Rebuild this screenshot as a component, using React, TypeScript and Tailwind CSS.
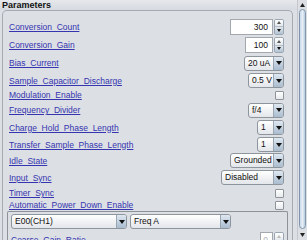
import React from "react";

type Ctl =
  | { kind: "spin"; value: string; w: number }
  | { kind: "combo"; value: string; w: number }
  | { kind: "check" };

type Row = { label: string; h: number; ctl: Ctl };

const rows: Row[] = [
  { label: "Conversion_Count", h: 19, ctl: { kind: "spin", value: "300", w: 54 } },
  { label: "Conversion_Gain", h: 18, ctl: { kind: "spin", value: "100", w: 39 } },
  { label: "Bias_Current", h: 18, ctl: { kind: "combo", value: "20 uA", w: 40 } },
  { label: "Sample_Capacitor_Discharge", h: 17, ctl: { kind: "combo", value: "0.5 V", w: 36 } },
  { label: "Modulation_Enable", h: 12, ctl: { kind: "check" } },
  { label: "Frequency_Divider", h: 18, ctl: { kind: "combo", value: "f/4", w: 36 } },
  { label: "Charge_Hold_Phase_Length", h: 17, ctl: { kind: "combo", value: "1", w: 27 } },
  { label: "Transfer_Sample_Phase_Length", h: 17, ctl: { kind: "combo", value: "1", w: 27 } },
  { label: "Idle_State", h: 15, ctl: { kind: "combo", value: "Grounded", w: 54 } },
  { label: "Input_Sync", h: 19, ctl: { kind: "combo", value: "Disabled", w: 63 } },
  { label: "Timer_Sync", h: 12, ctl: { kind: "check" } },
  { label: "Automatic_Power_Down_Enable", h: 12, ctl: { kind: "check" } },
];

const Down = () => (
  <svg width="6" height="4" viewBox="0 0 6 4">
    <path d="M0 0h6L3 4z" fill="#111" />
  </svg>
);

const Combo = ({ value, w }: { value: string; w: number }) => (
  <div
    className="h-[15px] flex rounded-[3px] border border-[#8f959c] bg-gradient-to-b from-white to-[#e3e6ea] overflow-hidden"
    style={{ width: w }}
  >
    <div className="flex-1 min-w-0 pl-[3px] text-[8.5px] leading-[13px] text-[#111] whitespace-nowrap overflow-hidden">
      {value}
    </div>
    <div className="w-[10px] flex items-center justify-center border-l border-[#9aa6b3] bg-gradient-to-b from-[#dfe8f1] to-[#a9bccf]">
      <Down />
    </div>
  </div>
);

const Spin = ({ value, w, disabled }: { value: string; w: number; disabled?: boolean }) => (
  <div className="h-[16px] flex" style={{ width: w }}>
    <div
      className={`flex-1 border border-[#a3a8ae] bg-white pr-[4px] text-right text-[8.5px] leading-[14px] ${
        disabled ? "text-[#b0b3b8]" : "text-[#111]"
      }`}
    >
      {value}
    </div>
    <div className="w-[10px] ml-[1px] flex flex-col border border-[#9aa6b3] rounded-[2px] overflow-hidden">
      <div className="flex-1 flex items-center justify-center bg-gradient-to-b from-white to-[#e4e8ec] border-b border-[#b4bcc5]">
        <svg width="4" height="3" viewBox="0 0 4 3">
          <path d="M0 3h4L2 0z" fill={disabled ? "#bbb" : "#555"} />
        </svg>
      </div>
      <div className="flex-1 flex items-center justify-center bg-gradient-to-b from-[#dfe6ed] to-[#b4c4d4]">
        <svg width="4" height="3" viewBox="0 0 4 3">
          <path d="M0 0h4L2 3z" fill={disabled ? "#bbb" : "#111"} />
        </svg>
      </div>
    </div>
  </div>
);

const Check = () => (
  <div className="w-[9px] h-[9px] rounded-[1px] border border-[#8e949a] bg-gradient-to-b from-white to-[#e8eaed]" />
);

const Label = ({ text }: { text: string }) => (
  <span className="text-[8.5px] leading-[10px] text-[#3535b0] underline decoration-[#3535b0] whitespace-nowrap">
    {text}
  </span>
);

export default function App() {
  return (
    <div className="w-[307px] h-[240px] overflow-hidden bg-[#dcdfe4] flex font-['Liberation_Sans',Arial,sans-serif]">
      <div className="flex-1 min-w-0 flex flex-col">
        <div className="h-[10px] pl-[2px] text-[9px] leading-[10px] font-bold text-[#111] bg-gradient-to-b from-[#e6e8ec] to-[#d6d9df]">
          Parameters
        </div>
        <div className="ml-[2px] mr-[4px] flex-1 border border-b-0 border-[#a6abb2] rounded-t-[5px] pt-[6px]">
          <div className="pl-[6px] pr-[8px]">
            {rows.map((r) => (
              <div key={r.label} className="flex items-center justify-between" style={{ height: r.h }}>
                <Label text={r.label} />
                {r.ctl.kind === "spin" && <Spin value={r.ctl.value} w={r.ctl.w} />}
                {r.ctl.kind === "combo" && <Combo value={r.ctl.value} w={r.ctl.w} />}
                {r.ctl.kind === "check" && <Check />}
              </div>
            ))}
          </div>
          <div className="mx-[4px] border border-b-0 border-[#8d9299] rounded-t-[2px] pl-[3px] pr-[3px] pt-[2px]">
            <div className="flex gap-[3px]">
              <Combo value="E00(CH1)" w={116} />
              <Combo value="Freq A" w={101} />
            </div>
            <div className="flex items-center justify-between mt-[3px] h-[16px]">
              <Label text="Coarse_Gain_Ratio" />
              <Spin value="0" w={24} disabled />
            </div>
          </div>
        </div>
      </div>
      <div className="w-[10px] flex flex-col bg-[#dcdfe4] border-l border-[#c4c8ce]">
        <div className="h-[9px] flex items-center justify-center">
          <svg width="5" height="4" viewBox="0 0 5 4">
            <path d="M0 4h5L2.5 0z" fill="#222" />
          </svg>
        </div>
        <div className="flex-1 mx-[1px] rounded-[4px] border border-[#7f96ad] bg-gradient-to-r from-[#c9d8e7] via-[#e6eef6] to-[#b9cbdd]" />
        <div className="h-[11px] flex items-center justify-center">
          <svg width="5" height="4" viewBox="0 0 5 4">
            <path d="M0 0h5L2.5 4z" fill="#222" />
          </svg>
        </div>
      </div>
    </div>
  );
}
